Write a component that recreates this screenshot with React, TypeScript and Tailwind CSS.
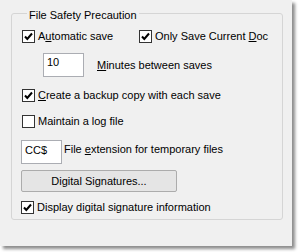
const font = { fontFamily: '"Liberation Sans", Arial, sans-serif' };

function Check({ checked }: { checked: boolean }) {
  return (
    <span className="w-[13px] h-[13px] shrink-0 border border-[#333] bg-white flex items-center justify-center">
      {checked && (
        <svg width="11" height="11" viewBox="0 0 11 11">
          <path d="M2 5.5 L4.3 8 L9 2.5" fill="none" stroke="#000" strokeWidth="2" />
        </svg>
      )}
    </span>
  );
}

function CheckRow({
  checked,
  children,
  className = "",
}: {
  checked: boolean;
  children: React.ReactNode;
  className?: string;
}) {
  return (
    <label className={"flex items-center gap-[3px] h-[16px] " + className}>
      <Check checked={checked} />
      <span>{children}</span>
    </label>
  );
}

export default function App() {
  return (
    <div className="w-[299px] h-[252px] bg-white text-[11px] leading-[13px] text-black" style={font}>
      <div className="w-[292px] h-[246px] bg-[#f0f0f0] shadow-[3px_3px_3px_rgba(0,0,0,0.45)] pt-[5px] pl-[11px]">
        <fieldset className="w-[272px] border border-[#d5d5d5] rounded-[3px] pl-[10px] pb-[4px] flex flex-col">
          <legend className="ml-[5px] px-[2px] pt-[4px]">File Safety Precaution</legend>

          <div className="flex mt-[6px]">
            <CheckRow checked className="w-[117px]">
              A<u>u</u>tomatic save
            </CheckRow>
            <CheckRow checked>
              Only Save Current <u>D</u>oc
            </CheckRow>
          </div>

          <div className="flex items-center mt-[9px] ml-[21px]">
            <div className="w-[41px] h-[24px] border border-[#abadb3] bg-white pl-[3px] pt-[2px]">10</div>
            <span className="ml-[13px]">
              <u>M</u>inutes between saves
            </span>
          </div>

          <CheckRow checked className="mt-[10px]">
            <u>C</u>reate a backup copy with each save
          </CheckRow>

          <CheckRow checked={false} className="mt-[10px]">
            Maintain a log file
          </CheckRow>

          <div className="flex items-start mt-[11px] -ml-[1px]">
            <div className="w-[41px] h-[24px] border border-[#abadb3] bg-white pl-[3px] pt-[3px]">CC$</div>
            <span className="ml-[2px] mt-[3px]">
              File <u>e</u>xtension for temporary files
            </span>
          </div>

          <button className="mt-[6px] -ml-[1px] w-[156px] h-[22px] border border-[#acacac] rounded-[2px] bg-[#e5e5e5] text-center">
            Digital Signatures...
          </button>

          <CheckRow checked className="mt-[7px] -ml-[1px]">
            Display digital signature information
          </CheckRow>
        </fieldset>
      </div>
    </div>
  );
}
